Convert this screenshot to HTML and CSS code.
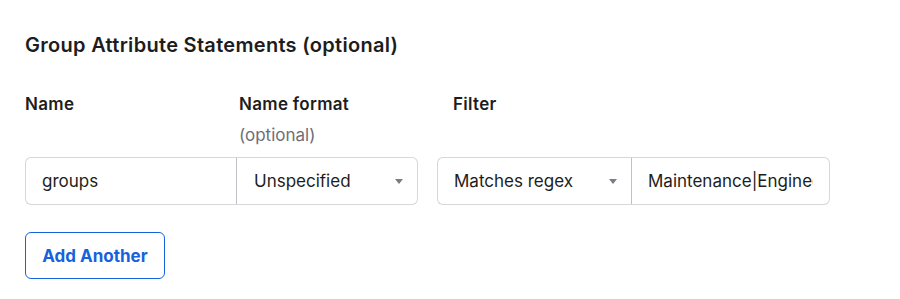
FILE: index.html
```html
<!DOCTYPE html>
<html>
<head>
<meta charset="utf-8">
<link rel="stylesheet" href="styles.css">
</head>
<body>
<section class="panel">
  <h2 class="title">Group Attribute Statements (optional)</h2>
  <div class="row">
    <div class="group">
      <div class="labels">
        <div class="label name-col">Name</div>
        <div class="label fmt-col">Name format<span class="hint">(optional)</span></div>
      </div>
      <div class="fields">
        <div class="field text name-col"><span class="value">groups</span></div>
        <div class="field select fmt-col"><span class="value">Unspecified</span><span class="caret"></span></div>
      </div>
    </div>
    <div class="group">
      <div class="labels">
        <div class="label filter-label">Filter</div>
      </div>
      <div class="fields">
        <div class="field select op-col"><span class="value">Matches regex</span><span class="caret"></span></div>
        <div class="field text regex-col"><span class="value">Maintenance|Engineering</span></div>
      </div>
    </div>
  </div>
  <button class="add-btn" type="button">Add Another</button>
</section>
</body>
</html>
```
FILE: styles.css
```css
* { box-sizing: border-box; }
html, body { margin: 0; background: #ffffff; }
body {
  font-family: Inter, "Noto Sans", "Liberation Sans", sans-serif;
  color: #1d1d21;
}
.panel {
  padding: 31px 25px 0 25px;
}
.title {
  margin: 0;
  font-size: 20px;
  font-weight: 600;
  letter-spacing: 0.3px;
  line-height: 28px;
}
.row {
  display: flex;
  gap: 19px;
  margin-top: 32px;
}
.group { display: flex; flex-direction: column; }
.labels {
  display: flex;
  height: 66px;
}
.label {
  font-size: 17px;
  font-weight: 600;
  letter-spacing: 0.3px;
  line-height: 26px;
}
.hint {
  display: block;
  font-weight: 400;
  letter-spacing: 0;
  color: #6e6e78;
  font-size: 17px;
  line-height: 36px;
}
.name-col { width: 212px; }
.fmt-col { width: 181px; }
.labels .fmt-col { padding-left: 2px; }
.filter-label { padding-left: 16px; }
.op-col { width: 195px; }
.regex-col { width: 198px; }
.fields { display: flex; }
.field {
  height: 48px;
  border: 1px solid #d7d7dc;
  display: flex;
  align-items: center;
  padding: 0 16px;
  font-size: 17px;
  color: #1d1d21;
  background: #fff;
  overflow: hidden;
  white-space: nowrap;
}
.field .value { overflow: hidden; flex: 1; text-overflow: clip; }
.fields .field:first-child {
  border-radius: 6px 0 0 6px;
  border-right-color: #bfbfc5;
}
.fields .field:last-child {
  border-radius: 0 6px 6px 0;
  border-left: none;
}
.select { padding-right: 14px; }
.fields .field:last-child.select { padding-left: 17px; }
.caret {
  width: 0; height: 0;
  border-left: 4px solid transparent;
  border-right: 4px solid transparent;
  border-top: 5px solid #7c7c86;
  margin-left: 8px;
}
.add-btn {
  display: block;
  margin-top: 27px;
  width: 140px;
  height: 47px;
  border: 1px solid #1662dd;
  border-radius: 6px;
  background: #fff;
  color: #1662dd;
  font-family: inherit;
  font-size: 17px;
  font-weight: 700;
  padding: 0;
}
```
